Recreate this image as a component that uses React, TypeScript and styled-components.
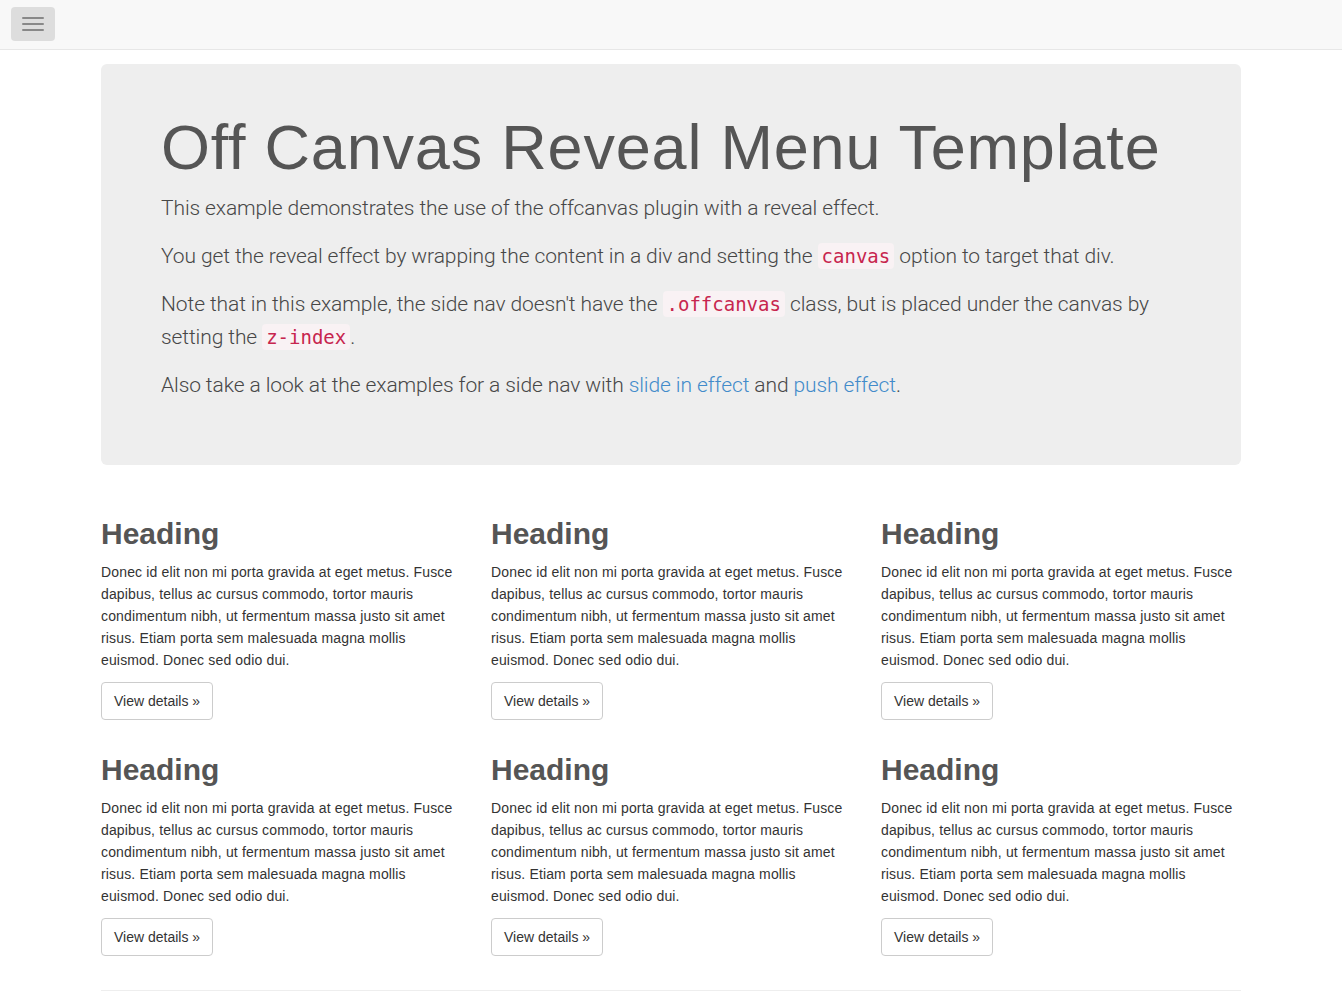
import React from "react";
import styled, { createGlobalStyle } from "styled-components";

const GlobalStyle = createGlobalStyle`
  html, body { margin: 0; padding: 0; background: #fff; }
  body {
    font-family: "Liberation Sans", Arial, sans-serif;
    font-size: 14px;
    line-height: 22px;
    color: #333;
  }
  * { box-sizing: border-box; }
`;

const Navbar = styled.header`
  height: 50px;
  background: #f8f8f8;
  border-bottom: 1px solid #e7e7e7;
  display: flex;
  align-items: flex-start;
  padding: 7px 0 0 11px;
`;

const Toggle = styled.button`
  width: 44px;
  height: 34px;
  background: #ddd;
  border: none;
  border-radius: 4px;
  padding: 0;
  display: flex;
  flex-direction: column;
  align-items: center;
  justify-content: center;
  gap: 4px;
  cursor: pointer;
`;

const Bar = styled.span`
  display: block;
  width: 22px;
  height: 2px;
  border-radius: 1px;
  background: #888;
`;

const Container = styled.main`
  width: 1140px;
  margin: 14px auto 0;
`;

const Jumbotron = styled.section`
  background: #eee;
  border-radius: 6px;
  padding: 48px 60px;
  margin-bottom: 29px;
  color: #555;
`;

const Title = styled.h1`
  font-size: 63px;
  line-height: 69px;
  font-weight: 400;
  margin: 1px 0 10px;
  color: #555;
  letter-spacing: 0.8px;
  white-space: nowrap;
`;

const Lead = styled.p`
  font-family: Roboto, "Liberation Sans", Arial, sans-serif;
  font-weight: 300;
  font-size: 21px;
  line-height: 33px;
  letter-spacing: -0.1px;
  margin: 0 0 15px;
  color: #474747;
`;

const Code = styled.code`
  font-family: "DejaVu Sans Mono", "Liberation Mono", monospace;
  font-weight: 400;
  font-size: 19px;
  line-height: 19px;
  letter-spacing: 0;
  color: #c7254e;
  background: #f9f2f4;
  border-radius: 4px;
  padding: 2px 4px;
`;

const Link = styled.a`
  color: #428bca;
  text-decoration: none;
`;

const Grid = styled.div`
  display: grid;
  grid-template-columns: repeat(3, 360px);
  column-gap: 30px;
`;

const Col = styled.div``;

const Heading = styled.h2`
  font-size: 30px;
  line-height: 33px;
  font-weight: 700;
  color: #555;
  margin: 23px 0 11px;
`;

const Text = styled.p<{ $gap?: number }>`
  margin: 0 0 ${(p) => p.$gap ?? 11}px;
  font-size: 14px;
  line-height: 22px;
  letter-spacing: 0.15px;
  color: #333;
`;

const Button = styled.a`
  display: inline-block;
  padding: 7px 12px;
  font-size: 14px;
  line-height: 22px;
  letter-spacing: 0;
  color: #333;
  background: #fff;
  border: 1px solid #ccc;
  border-radius: 4px;
  text-decoration: none;
`;

const Rule = styled.hr`
  border: 0;
  border-top: 1px solid #eee;
  margin: 24px 0 20px;
`;

const body =
  "Donec id elit non mi porta gravida at eget metus. Fusce dapibus, tellus ac cursus commodo, tortor mauris condimentum nibh, ut fermentum massa justo sit amet risus. Etiam porta sem malesuada magna mollis euismod. Donec sed odio dui.";

export default function App() {
  return (
    <>
      <GlobalStyle />
      <Navbar>
        <Toggle aria-label="Toggle navigation">
          <Bar />
          <Bar />
          <Bar />
        </Toggle>
      </Navbar>
      <Container>
        <Jumbotron>
          <Title>Off Canvas Reveal Menu Template</Title>
          <Lead>This example demonstrates the use of the offcanvas plugin with a reveal effect.</Lead>
          <Lead>
            You get the reveal effect by wrapping the content in a div and setting the <Code>canvas</Code> option to target that div.
          </Lead>
          <Lead>
            Note that in this example, the side nav doesn't have the <Code>.offcanvas</Code> class, but is placed under the canvas by setting the <Code>z-index</Code>.
          </Lead>
          <Lead>
            Also take a look at the examples for a side nav with <Link href="#">slide in effect</Link> and <Link href="#">push effect</Link>.
          </Lead>
        </Jumbotron>
        <Grid>
          {Array.from({ length: 6 }).map((_, i) => (
            <Col key={i}>
              <Heading>Heading</Heading>
              <Text>{body}</Text>
              <Text $gap={10}>
                <Button href="#">View details »</Button>
              </Text>
            </Col>
          ))}
        </Grid>
        <Rule />
      </Container>
    </>
  );
}
